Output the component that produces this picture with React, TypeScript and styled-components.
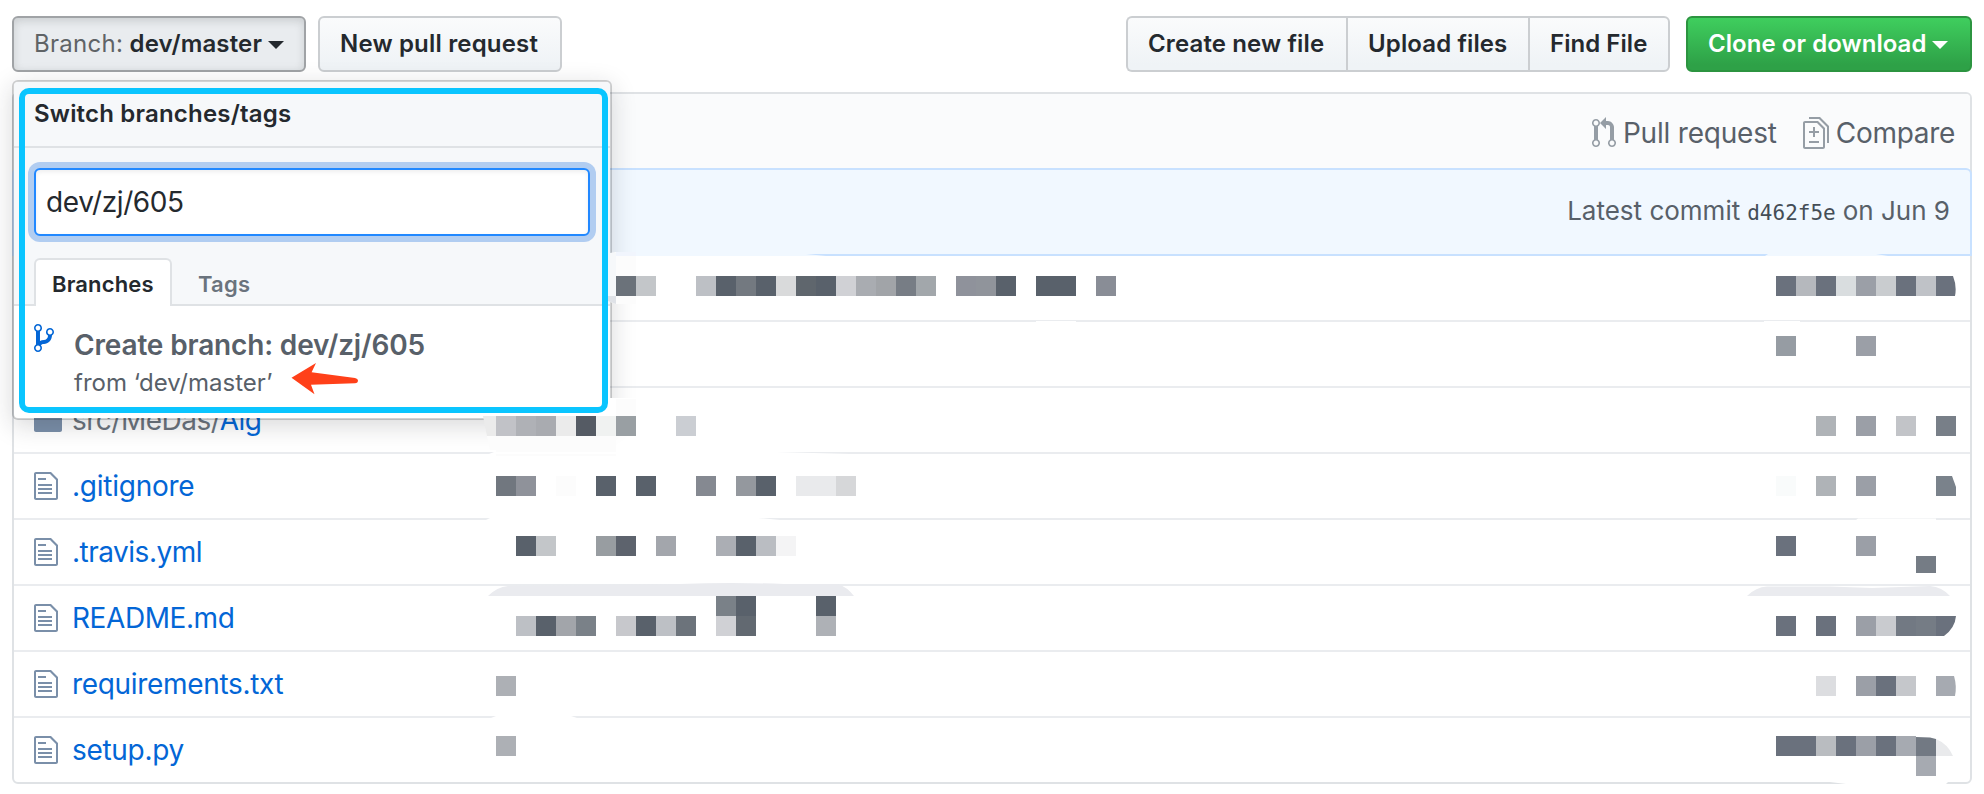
import React from 'react';
import styled, { createGlobalStyle } from 'styled-components';

const Global = createGlobalStyle`
  *{box-sizing:border-box}
  body{margin:0;background:#fff;color:#24292e;font-family:Inter,"Liberation Sans",sans-serif;font-size:28px;line-height:42px}
`;
const Page = styled.div`position:relative;width:1984px;height:794px;padding:16px 12px 0;overflow:hidden;`;
const Toolbar = styled.div`display:flex;height:56px;margin-bottom:20px;`;
const Spacer = styled.div`flex:1;`;
const Fit = styled.span<{ $ls?: number }>`letter-spacing:${p => p.$ls ?? 0}px;white-space:pre;`;
const Button = styled.button<{ $w: number; $kind?: 'selected' | 'primary'; $gap?: number }>`
  width:${p => p.$w}px;height:56px;margin:0 ${p => p.$gap ?? 0}px 0 0;padding:0 0 0 20px;
  display:flex;align-items:center;text-align:left;
  font:600 24px/40px Inter,"Liberation Sans",sans-serif;
  color:${p => (p.$kind === 'primary' ? '#fff' : '#24292e')};
  border:2px solid ${p => (p.$kind === 'primary' ? '#2c9440' : p.$kind === 'selected' ? '#a0a3a6' : '#cbced1')};
  border-radius:6px;
  background:${p => (p.$kind === 'primary' ? 'linear-gradient(#3fce5e,#2ea147 90%)' : p.$kind === 'selected' ? '#e9ecef' : 'linear-gradient(#fafbfc,#eff3f6 90%)')};
  box-shadow:${p => (p.$kind === 'selected' ? 'inset 0 3px 8px rgba(27,31,35,.15)' : 'none')};
`;
const Group = styled.div`display:flex;margin-right:16px;
  button{border-radius:0;border-right-width:0;}
  button:first-child{border-radius:6px 0 0 6px;}
  button:last-child{border-radius:0 6px 6px 0;border-right-width:2px;}
`;
const Light = styled.span`font-weight:400;color:#5f6366;letter-spacing:.3px;`;
const Caret = styled.i`width:0;height:0;margin:2px 0 0 6px;border:8px solid transparent;border-top-color:currentColor;border-bottom:0;`;

const FileBox = styled.div`border:2px solid #dfe2e5;border-radius:6px;height:692px;`;
const Actions = styled.div`height:74px;background:#fafbfc;border-radius:4px 4px 0 0;display:flex;justify-content:flex-end;align-items:center;padding:4px 15px 0 0;color:#586069;gap:26px;`;
const Action = styled.span`display:flex;align-items:center;gap:7px;
  svg{color:#959da5;}
`;
const Commit = styled.div`height:88px;margin:0 -2px;border:2px solid #c8e1ff;border-radius:6px 6px 0 0;background:#f1f8ff;color:#586069;display:flex;justify-content:flex-end;align-items:center;padding:0 20px 2px 0;font-size:26px;
  code{font:21px/42px "DejaVu Sans Mono",monospace;color:#444d56;margin:4px 7px 0;}
`;
const Row = styled.div`height:66px;border-top:2px solid #eaecef;display:flex;align-items:center;padding-left:20px;color:#0366d6;
  &:first-of-type{height:64px;border-top:0;}
`;
const RowIcon = styled.span`width:38px;display:flex;color:#7a8fa9;`;
const Muted = styled.span`color:#6a737d;`;

const Menu = styled.div`position:absolute;left:12px;top:80px;width:600px;height:340px;background:#fff;background-clip:padding-box;border:2px solid rgba(27,31,35,.2);border-radius:6px;box-shadow:0 6px 24px rgba(27,31,35,.17);`;
const MenuTitle = styled.div`height:66px;padding:10px 20px;background:#f6f8fa;border-radius:4px 4px 0 0;border-bottom:2px solid #dfe2e5;font-size:24px;font-weight:600;line-height:44px;`;
const Filters = styled.div`height:158px;padding:20px 20px 0;background:#f6f8fa;border-bottom:2px solid #dfe2e5;`;
const Field = styled.div`height:68px;border:2px solid #2188ff;border-radius:6px;background:#fff;box-shadow:inset 0 2px 4px rgba(27,31,35,.075),0 0 0 6px #b1cdf1;padding:11px 10px;`;
const Tabs = styled.div`display:flex;margin-top:22px;font-size:22px;font-weight:600;color:#6a737d;`;
const Tab = styled.div<{ $on?: boolean }>`width:138px;height:48px;padding-left:${p => (p.$on ? 16 : 26)}px;line-height:${p => (p.$on ? 48 : 52)}px;
  ${p => p.$on && 'border:2px solid #dfe2e5;border-bottom:0;border-radius:6px 6px 0 0;background:#fff;color:#24292e;'}
`;
const Create = styled.div`display:flex;padding:16px 20px;color:#586069;`;
const CreateIcon = styled.span`width:40px;color:#0366d6;`;
const CreateText = styled.div`padding-top:2px;font-weight:600;line-height:42px;`;
const From = styled.div`font-size:24px;font-weight:400;line-height:34px;`;
const Highlight = styled.div`position:absolute;left:19px;top:88px;width:589px;height:325px;border:6px solid #0ac5ff;border-radius:10px;`;
const Overlay = styled.svg`position:absolute;left:0;top:0;`;

const paths = {
  branch: 'M10 5c0-1.11-.89-2-2-2a1.993 1.993 0 0 0-1 3.72v.3c-.02.52-.23.98-.63 1.38-.4.4-.86.61-1.38.63-.83.02-1.48.16-2 .45V4.72a1.993 1.993 0 0 0-1-3.72C.88 1 0 1.89 0 3a2 2 0 0 0 1 1.72v6.56c-.59.35-1 .99-1 1.72 0 1.11.89 2 2 2 1.11 0 2-.89 2-2 0-.53-.2-1-.53-1.36.09-.06.48-.41.59-.47.25-.11.56-.17.94-.17 1.05-.05 1.95-.45 2.75-1.25S8.95 7.77 9 6.73h-.02C9.59 6.37 10 5.73 10 5zM2 1.8c.66 0 1.2.55 1.2 1.2 0 .65-.55 1.2-1.2 1.2C1.35 4.2.8 3.65.8 3c0-.65.55-1.2 1.2-1.2zm0 12.41c-.66 0-1.2-.55-1.2-1.2 0-.65.55-1.2 1.2-1.2.65 0 1.2.55 1.2 1.2 0 .65-.55 1.2-1.2 1.2zm6-8c-.66 0-1.2-.55-1.2-1.2 0-.65.55-1.2 1.2-1.2.65 0 1.2.55 1.2 1.2 0 .65-.55 1.2-1.2 1.2z',
  pull: 'M11 11.28V5c-.03-.78-.34-1.47-.94-2.06C9.46 2.35 8.78 2.03 8 2H7V0L4 3l3 3V4h1c.27.02.48.11.69.31.21.2.3.42.31.69v6.28A1.993 1.993 0 0 0 10 15a1.993 1.993 0 0 0 1-3.72zm-1 2.92c-.66 0-1.2-.55-1.2-1.2 0-.65.55-1.2 1.2-1.2.65 0 1.2.55 1.2 1.2 0 .65-.55 1.2-1.2 1.2zM4 3c0-1.11-.89-2-2-2a1.993 1.993 0 0 0-1 3.72v6.56A1.993 1.993 0 0 0 2 15a1.993 1.993 0 0 0 1-3.72V4.72c.59-.34 1-.98 1-1.72zm-.8 10c0 .66-.55 1.2-1.2 1.2-.65 0-1.2-.55-1.2-1.2 0-.65.55-1.2 1.2-1.2.65 0 1.2.55 1.2 1.2zM2 4.2C1.34 4.2.8 3.65.8 3c0-.65.55-1.2 1.2-1.2.65 0 1.2.55 1.2 1.2 0 .65-.55 1.2-1.2 1.2z',
  diff: 'M6 7h2v1H6v2H5V8H3V7h2V5h1v2zm-3 6h5v-1H3v1zM7.5 2L11 5.5V15c0 .55-.45 1-1 1H1c-.55 0-1-.45-1-1V3c0-.55.45-1 1-1h6.5zM10 6L7 3H1v12h9V6zM8.5 0H3v1h5l4 4v8h1V4.5L8.5 0z',
  file: 'M6 5H2V4h4v1zM2 8h7V7H2v1zm0 2h7V9H2v1zm0 2h7v-1H2v1zm10-7.5V14c0 .55-.45 1-1 1H1c-.55 0-1-.45-1-1V2c0-.55.45-1 1-1h7.5L12 4.5zM11 5L8 2H1v12h10V5z',
  folder: 'M13 4H7V3c0-.66-.31-1-1-1H1c-.55 0-1 .45-1 1v10c0 .55.45 1 1 1h12c.55 0 1-.45 1-1V5c0-.55-.45-1-1-1zM6 4H1V3h5v1z',
};
const Octicon = ({ name, w }: { name: keyof typeof paths; w: number }) => (
  <svg width={w * 2} height={32} viewBox={`0 0 ${w} 16`} fill="currentColor"><path fillRule="evenodd" d={paths[name]} /></svg>
);

/* file name, letter spacing */
const files: [string, number][] = [['.gitignore', -0.25], ['.travis.yml', -0.5], ['README.md', -0.42], ['requirements.txt', -0.32], ['setup.py', -0.3]];

/* Redaction mosaic: 20px cells as [row, first column, colours], counted from (496, 276); "-" leaves a cell clear */
const mosaic: [number, number, string][] = [
  [0, 6, '#6b727a #c3c6c9'],
  [0, 10, '#bdc0c5 #59616b #737980 #59616b #d9dadb #5f666d #59616b #d0d1d5 #a9acb1 #a1a4a8 #777d85 #a2a7ab - #8f929b #90949b #59616b - #59616b #59616b - #898d96'],
  [0, 64, '#6a717d #b5b8bd #6a717d #d9dddf #9b9fa7 #c9cccf #6a717d #bfc2c7'],
  [3, 64, '#969ca3 - - - #9b9fa7'],
  [7, 0, '#c1c2c7 #afb1b6 #a9abb0 #ebebeb #555b64 #f0f2f1 #999fa3 - - #cbced3'],
  [7, 66, '#afb3b7 - #9b9fa7 - #c2c4c8 - #787f88'],
  [10, 0, '#71777f #8f929a - #fcfcfc - #59616b - #59616b - - #858991 - #94989e #59616b - #e9eaec #e9eaec #d6d7d9'],
  [10, 64, '#f9fbfb - #afb3b7 - #9b9fa7'],
  [13, 1, '#59616b #c3c6c9 - - #989da1 #5d636d - #a3a6ac - - #abaeb4 #59616b #babdc2 #f4f4f5'],
  [13, 64, '#6a717d - - - #9b9fa7'],
  [16, 11, '#7a8188 #59616b - - - #59616b'],
  [17, 1, '#bdc0c5 #59616b #a2a5aa #7a8188 - #c7c8cc #59616b #bdc0c5 #6c737b - #d0d1d5 #626971 - - - #aeb1b6'],
  [17, 64, '#6a717d - #6a717d - #9b9fa7 #c9cbcf #727983 #757c85'],
  [20, 0, '#adb0b5'],
  [20, 66, '#dcdde0 - #9b9fa7 #6a717d #c5c7cb'],
  [23, 0, '#adb0b5'],
  [23, 64, '#6a717d #6a717d #b9bcc0 #6a717d #9b9fa7 #6a717d #a6aab1'],
  [24, 71, '#a6aab1'],
];

/* Brush shapes: wiped-out rule segments, smeared bands and cells cut by the round brush tip */
const smears: [string, string][] = [
  ['#f1f8ff', 'M613 254H806L826 256H613zM1765 256L1768 254H1876L1888 256z'],
  ['#fcfcfc', 'M610 253L616 252H636V304H616L610 302z'],
  ['#f1f5fd', 'M616 252H636V256H616z'],
  ['#f6f8fa', 'M608 253H616V296H608z'],
  ['#dfe2e7', 'M608 296H616V304L608 301z'],
  ['#fff', 'M1036 321H1076V322H1036zM1764 321H1800V322H1764z'],
  ['#fff', 'M483 414H604L608 398H640V416H483z'],
  ['#fcfcfc', 'M616 399H636V416H616z'],
  ['#ebebeb', 'M483 416H496V436H487z'],
  ['#fcfcfc', 'M487 436H616V456H496V450H490z'],
  ['#fff', 'M489 454L494 452H776L850 454zM486 520L490 518H758L780 520zM1858 518.6H1936V520H1856zM491 718L496 716H571L577 718z'],
  ['#fff', 'M1830 782H1948L1946 784H1846z'],
  ['#eaebef', 'M488 596Q497 587 508 586L680 584Q732 582 784 584H838Q847 587 854 596z'],
  ['#eaebef', 'M1747 596Q1756 587 1767 586.5H1830L1872 588L1930 586Q1942 587 1950 596z'],
  ['#6a717d', 'M1936 276H1953Q1957 286 1955 296H1936zM1936 616H1956Q1955 628 1944 636H1936z'],
  ['#7a828b', 'M1936 476H1952L1956 487V496H1936z'],
  ['#757c85', 'M1916 556H1936V573H1916z'],
  ['#a6aab1', 'M1936 676H1954Q1957 686 1955 696H1936z'],
  ['#727983', 'M1916 737L1930 737.5L1936 739V756H1916z'],
  ['#e9eaec', 'M1936 739Q1948 744 1953 756H1936z'],
];

export default function App() {
  return (
    <Page>
      <Global />
      <Toolbar>
        <Button $w={294} $kind="selected" $gap={12}><Fit $ls={0.15}><Light>Branch:</Light> dev/master</Fit><Caret /></Button>
        <Button $w={244}><Fit $ls={0.18}>New pull request</Fit></Button>
        <Spacer />
        <Group>
          <Button $w={220}><Fit $ls={0.13}>Create new file</Fit></Button>
          <Button $w={182}><Fit $ls={0.12}>Upload files</Fit></Button>
          <Button $w={142}><Fit $ls={0.05}>Find File</Fit></Button>
        </Group>
        <Button $w={286} $kind="primary"><Fit $ls={0.05}>Clone or download</Fit><Caret /></Button>
      </Toolbar>
      <FileBox>
        <Actions>
          <Action><Octicon name="pull" w={12} /><Fit $ls={-0.2}>Pull request</Fit></Action>
          <Action><Octicon name="diff" w={13} /><Fit $ls={-0.3}>Compare</Fit></Action>
        </Actions>
        <Commit><Fit>Latest commit</Fit><code>d462f5e</code><Fit>on Jun 9</Fit></Commit>
        <section>
          <Row /><Row />
          <Row><RowIcon><Octicon name="folder" w={14} /></RowIcon><Fit $ls={-0.5}><Muted>src/MeDas/</Muted>Alg</Fit></Row>
          {files.map(([n, ls]) => (
            <Row key={n}><RowIcon><Octicon name="file" w={12} /></RowIcon><Fit $ls={ls}>{n}</Fit></Row>
          ))}
        </section>
      </FileBox>
      <Menu>
        <MenuTitle><Fit $ls={0.19}>Switch branches/tags</Fit></MenuTitle>
        <Filters>
          <Field><Fit $ls={-0.38}>dev/zj/605</Fit></Field>
          <Tabs><Tab $on><Fit $ls={0.15}>Branches</Fit></Tab><Tab><Fit $ls={0.2}>Tags</Fit></Tab></Tabs>
        </Filters>
        <Create>
          <CreateIcon><Octicon name="branch" w={10} /></CreateIcon>
          <CreateText><Fit $ls={-0.16}>Create branch: dev/zj/605</Fit><From><Fit>from ‘dev/master’</Fit></From></CreateText>
        </Create>
      </Menu>
      <Overlay width="1984" height="794">
        {smears.map(([f, d], i) => <path key={i} fill={f} d={d} />)}
        {mosaic.map(([r, c, s]) => s.split(' ').map((f, i) => f !== '-' && (
          <rect key={`${r}-${c}-${i}`} x={496 + 20 * (c + i)} y={276 + 20 * r} width="20" height="20" fill={f} />
        )))}
        <path fill="#ff4019" d="M291.500 377.700L316 363L311.600 372.200L355 378Q358 378.700 358 380.500Q358 383 355 383.200L311 384.700L314.500 394.300z" />
      </Overlay>
      <Highlight />
    </Page>
  );
}
